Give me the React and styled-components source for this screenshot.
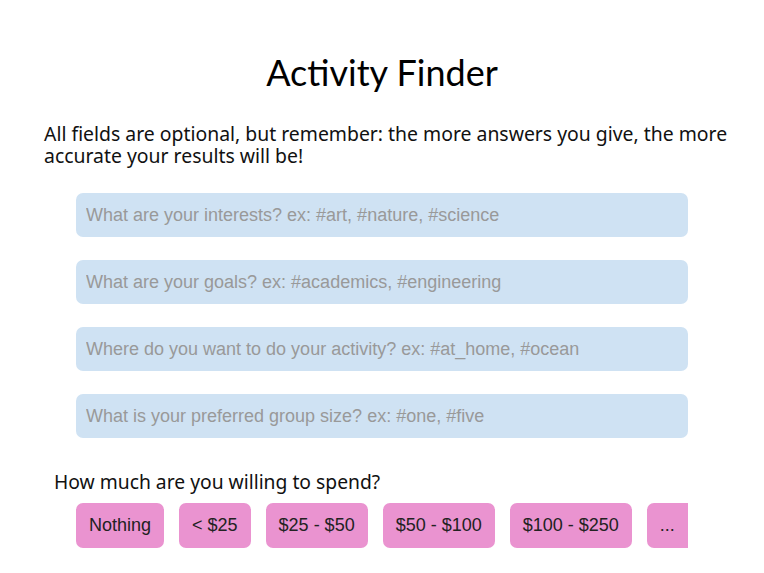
import React from 'react'
import styled, { createGlobalStyle } from 'styled-components'

const fields = [
  'What are your interests? ex: #art, #nature, #science',
  'What are your goals? ex: #academics, #engineering',
  'Where do you want to do your activity? ex: #at_home, #ocean',
  'What is your preferred group size? ex: #one, #five',
]

const prices = ['Nothing', '< $25', '$25 - $50', '$50 - $100', '$100 - $250', '...']

const App = () => {
  return (
    <Page>
      <GlobalStyle />
      <Title>Activity Finder</Title>
      <Intro>
        All fields are optional, but remember: the more answers you give, the more
        accurate your results will be!
      </Intro>
      <Fields>
        {fields.map((f) => (
          <Field key={f} placeholder={f} />
        ))}
      </Fields>
      <Question>How much are you willing to spend?</Question>
      <Prices>
        {prices.map((p) => (
          <Price key={p} $more={p === '...'}>{p}</Price>
        ))}
      </Prices>
    </Page>
  )
}

const GlobalStyle = createGlobalStyle`
  body {
    margin: 0;
    background: #fff;
  }
`

const Page = styled.div`
  width: 764px;
  height: 573px;
  overflow: hidden;
  padding-top: 48px;
  box-sizing: border-box;
`

const Title = styled.h1`
  margin: 0;
  text-align: center;
  font-family: Lato, sans-serif;
  font-weight: 400;
  font-size: 36px;
  line-height: 48px;
  color: #000;
`

const Intro = styled.p`
  margin: 27px 0 0 44px;
  width: 712px;
  font-family: "Noto Sans", sans-serif;
  font-size: 19.4px;
  line-height: 22px;
  color: #111;
`

const Fields = styled.div`
  display: flex;
  flex-direction: column;
  gap: 23px;
  margin: 26px 0 0 76px;
  width: 612px;
`

const Field = styled.input`
  height: 44px;
  border: none;
  border-radius: 7px;
  background: #cfe2f3;
  padding: 0 10px;
  font-family: "Liberation Sans", Arial, sans-serif;
  font-size: 18px;
  outline: none;
  &::placeholder {
    color: #999;
  }
`

const Question = styled.div`
  margin: 32px 0 0 54px;
  font-family: "Noto Sans", sans-serif;
  font-size: 19.3px;
  line-height: 24px;
  color: #111;
`

const Prices = styled.div`
  display: flex;
  gap: 15px;
  margin: 9px 0 0 76px;
  width: 612px;
  overflow: hidden;
`

const Price = styled.button`
  flex-shrink: 0;
  height: 45px;
  min-width: ${(p) => (p.$more ? '56px' : '0')};
  border: none;
  border-radius: 7px;
  background: #ea93d0;
  padding: 0 13px;
  text-align: left;
  font-family: "Liberation Sans", Arial, sans-serif;
  font-size: 18px;
  color: #222;
  cursor: pointer;
`

export default App
